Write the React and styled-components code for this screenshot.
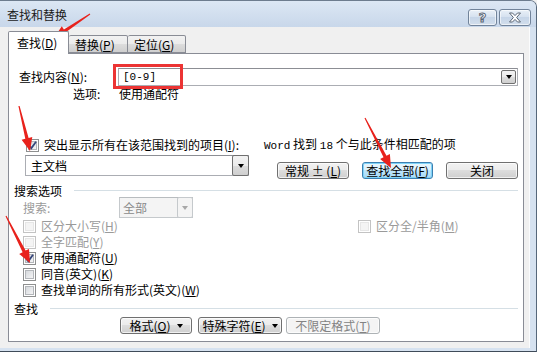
import React from "react";
import styled, { createGlobalStyle } from "styled-components";

const GlobalStyle = createGlobalStyle`
  html, body { margin: 0; padding: 0; background: #f0f0f0; }
  body {
    font-family: "Noto Sans CJK SC", "Noto Sans", sans-serif;
    font-size: 12px;
    color: #000;
  }
  * { box-sizing: border-box; }
`;

const Window = styled.div`
  position: relative;
  width: 537px;
  height: 352px;
  display: flex;
  flex-direction: column;
  background: #d6e2f0;
  border-top: 1px solid #6d7c8e;
  border-right: 1px solid #56677a;
  border-bottom: 1px solid #3f4b59;
  border-top-right-radius: 7px;
  overflow: hidden;
`;

const TitleBar = styled.div`
  height: 26px;
  flex: none;
  display: flex;
  align-items: center;
  padding: 1px 5px 0 7px;
  background: linear-gradient(#dce7f4, #c8d7ea);
`;

const Title = styled.span`
  flex: 1;
  line-height: 14px;
  color: #1a1a1a;
`;

const CaptionButtons = styled.div`
  display: flex;
  gap: 2px;
  align-self: flex-start;
  margin-top: 7px;
`;

const CaptionButton = styled.div`
  width: ${(p) => p.$w}px;
  height: 17px;
  display: flex;
  align-items: center;
  justify-content: center;
  border: 1px solid #71839a;
  border-radius: 3px;
  background: linear-gradient(#e9f0f8, #d4e0ee 50%, #c6d5e8 50%, #d2deec);
  box-shadow: inset 0 0 0 1px rgba(255, 255, 255, 0.6);
`;

const HelpGlyph = styled.span`
  font-family: "DejaVu Sans", sans-serif;
  font-weight: bold;
  font-size: 13px;
  line-height: 13px;
  color: #fff;
  -webkit-text-stroke: 1px #5b6675;
`;

const Client = styled.div`
  width: 530px;
  height: 321px;
  flex: none;
  display: flex;
  flex-direction: column;
  padding: 4px 5px 6px 8px;
  background: #f0f0f0;
  border-right: 1px solid #fbfcfd;
`;

const TabRow = styled.div`
  display: flex;
  align-items: flex-end;
  height: 23px;
  margin-bottom: -1px;
  position: relative;
  z-index: 1;
`;

const Tab = styled.div`
  width: ${(p) => p.$w}px;
  height: ${(p) => (p.$active ? 23 : 18)}px;
  margin-bottom: ${(p) => (p.$active ? 0 : 1)}px;
  padding: ${(p) => (p.$active ? "4px 0 0 8px" : "2px 0 0 6px")};
  border: 1px solid #898c95;
  border-bottom: ${(p) => (p.$active ? "none" : "1px solid #898c95")};
  border-left: ${(p) => (p.$first || p.$active ? "1px solid #898c95" : "none")};
  border-radius: 2px 2px 0 0;
  background: ${(p) =>
    p.$active ? "#fff" : "linear-gradient(#f2f2f2, #ebebeb 50%, #dddddd 50%, #cfcfcf)"};
  line-height: 14px;
  white-space: nowrap;
`;

const Key = styled.u`
  text-decoration: underline;
  text-underline-offset: 1px;
`;

const Panel = styled.div`
  width: 516px;
  height: 289px;
  display: flex;
  flex-direction: column;
  border: 1px solid #898c95;
  background: #fff;
`;

const Row = styled.div`
  display: flex;
  align-items: ${(p) => p.$align || "center"};
  height: ${(p) => p.$h}px;
  margin-top: ${(p) => p.$mt || 0}px;
  padding-left: ${(p) => p.$pl || 0}px;
  flex: none;
`;

const Text = styled.span`
  line-height: 14px;
  white-space: nowrap;
  color: ${(p) => (p.$disabled ? "#9a9a9a" : "#000")};
  width: ${(p) => (p.$w ? `${p.$w}px` : "auto")};
  flex: none;
  margin-left: ${(p) => p.$ml || 0}px;
`;

const Mono = styled.span`
  font-family: "Liberation Mono", monospace;
  font-size: 11px;
`;

const Combo = styled.div`
  width: ${(p) => p.$w}px;
  height: ${(p) => p.$h}px;
  display: flex;
  align-items: stretch;
  flex: none;
  border: 1px solid ${(p) => (p.$disabled ? "#c5c9cc" : "#abadb3")};
  border-top-color: ${(p) => (p.$disabled ? "#b8bcbf" : "#8c8e94")};
  background: ${(p) => (p.$disabled ? "#f4f4f4" : "#fff")};
  margin-left: ${(p) => p.$ml || 0}px;
`;

const ComboValue = styled.span`
  flex: 1;
  display: flex;
  align-items: center;
  padding-left: ${(p) => p.$pl || 4}px;
  line-height: 14px;
  color: ${(p) => (p.$disabled ? "#8a8a8a" : "#000")};
  font-size: ${(p) => p.$fs || 12}px;
`;

const ComboButton = styled.span`
  width: ${(p) => p.$w || 16}px;
  display: flex;
  align-items: center;
  justify-content: center;
  margin: ${(p) => (p.$inset ? "1px" : "-1px -1px -1px 0")};
  border: 1px solid ${(p) => (p.$disabled ? "#c5c9cc" : "#707070")};
  border-radius: 2px;
  background: ${(p) =>
    p.$disabled ? "#f4f4f4" : "linear-gradient(#f2f2f2, #ebebeb 50%, #dddddd 50%, #cfcfcf)"};
`;

const Caret = styled.span`
  width: 0;
  height: 0;
  border-left: 3.5px solid transparent;
  border-right: 3.5px solid transparent;
  border-top: 4px solid ${(p) => (p.$disabled ? "#a8a8a8" : "#000")};
  margin-left: ${(p) => p.$ml || 0}px;
`;

const Button = styled.div`
  width: ${(p) => p.$w}px;
  height: 17px;
  flex: none;
  display: flex;
  align-items: center;
  justify-content: center;
  margin-left: ${(p) => p.$ml || 0}px;
  border: 1px solid ${(p) => (p.$primary ? "#3c7fb1" : p.$disabled ? "#adb2b5" : "#707070")};
  border-radius: 3px;
  background: ${(p) =>
    p.$primary
      ? "linear-gradient(#eaf6fd, #d9f0fc 50%, #bee6fd 50%, #a7d9f5)"
      : p.$disabled
      ? "#f4f4f4"
      : "linear-gradient(#f2f2f2, #ebebeb 50%, #dddddd 50%, #cfcfcf)"};
  box-shadow: inset 0 0 0 1px ${(p) => (p.$primary ? "#7fd3f7" : "rgba(255,255,255,0.7)")};
  color: ${(p) => (p.$disabled ? "#838383" : "#000")};
  line-height: 14px;
  white-space: nowrap;
`;

const Check = styled.span`
  position: relative;
  width: 13px;
  height: 13px;
  flex: none;
  margin-left: ${(p) => p.$ml || 0}px;
  margin-right: 5px;
  border: 1px solid ${(p) => (p.$disabled ? "#c3c3c3" : "#8e8f8f")};
  background: #fff;
  &::before {
    content: "";
    position: absolute;
    inset: 1px;
    border: 1px solid ${(p) => (p.$disabled ? "#e6e6e6" : "#b3b6ba")};
    background: ${(p) =>
      p.$disabled ? "#f4f4f4" : "linear-gradient(135deg, #d6d9dd, #f4f4f5)"};
  }
  svg {
    position: absolute;
    left: 0;
    top: 0;
  }
`;

const GroupTitle = styled.div`
  display: flex;
  align-items: center;
  height: 14px;
  margin-top: ${(p) => p.$mt || 0}px;
  padding-left: 5px;
  flex: none;
  &::after {
    content: "";
    flex: none;
    width: ${(p) => p.$line}px;
    height: 1px;
    margin-left: auto;
    margin-right: 5px;
    background: #d5dfe5;
  }
`;

const Overlay = styled.svg`
  position: absolute;
  left: -1px;
  top: -1px;
  pointer-events: none;
`;

const arrowPoints = (x1, y1, x2, y2) => {
  const dx = x2 - x1;
  const dy = y2 - y1;
  const len = Math.hypot(dx, dy);
  const ux = dx / len;
  const uy = dy / len;
  const nx = -uy;
  const ny = ux;
  const head = 13;
  const hw = 5.5;
  const w0 = 0.6;
  const w1 = 1.7;
  const bx = x2 - ux * head;
  const by = y2 - uy * head;
  return [
    [x1 + nx * w0, y1 + ny * w0],
    [bx + nx * w1, by + ny * w1],
    [bx + nx * hw, by + ny * hw],
    [x2, y2],
    [bx - nx * hw, by - ny * hw],
    [bx - nx * w1, by - ny * w1],
    [x1 - nx * w0, y1 - ny * w0],
  ]
    .map((p) => p.map((v) => v.toFixed(1)).join(","))
    .join(" ");
};

const arrows = [
  [91, 14, 55, 38],
  [20, 106, 31, 151],
  [366, 118, 392, 168],
  [7, 216, 31, 263],
];

const CheckBox = ({ checked, disabled, ml }) => (
  <Check $disabled={disabled} $ml={ml}>
    {checked && (
      <svg width="11" height="11" viewBox="0 0 11 11">
        <path d="M2 5.5 L4.3 8.2 L9 1.8" fill="none" stroke="#34457a" strokeWidth="1.8" />
      </svg>
    )}
  </Check>
);

const checkRows = [
  { label: "区分大小写", key: "H", disabled: true, right: { label: "区分全/半角", key: "M" } },
  { label: "全字匹配", key: "Y", disabled: true },
  { label: "使用通配符", key: "U", checked: true },
  { label: "同音(英文)", key: "K" },
  { label: "查找单词的所有形式(英文)", key: "W" },
];

const App = () => (
  <>
    <GlobalStyle />
    <Window>
      <TitleBar>
        <Title>查找和替换</Title>
        <CaptionButtons>
          <CaptionButton $w={29}>
            <HelpGlyph>?</HelpGlyph>
          </CaptionButton>
          <CaptionButton $w={32}>
            <svg width="14" height="11" viewBox="0 0 14 11">
              <path
                d="M1.5 1 H4.5 L7 3.6 L9.5 1 H12.5 L8.6 5.5 L12.5 10 H9.5 L7 7.4 L4.5 10 H1.5 L5.4 5.5 Z"
                fill="#fff"
                stroke="#5b6675"
                strokeWidth="1"
              />
            </svg>
          </CaptionButton>
        </CaptionButtons>
      </TitleBar>
      <Client>
        <TabRow>
          <Tab $w={61} $active>
            查找(<Key>D</Key>)
          </Tab>
          <Tab $w={59}>
            替换(<Key>P</Key>)
          </Tab>
          <Tab $w={58}>
            定位(<Key>G</Key>)
          </Tab>
        </TabRow>
        <Panel>
          <Row $h={18} $mt={14} $pl={10}>
            <Text $w={99}>
              查找内容(<Key>N</Key>):
            </Text>
            <Combo $w={400} $h={18}>
              <ComboValue $pl={4}>
                <Mono>[0-9]</Mono>
              </ComboValue>
              <ComboButton $inset $w={15}>
                <Caret />
              </ComboButton>
            </Combo>
          </Row>
          <Row $h={14} $mt={1} $pl={64}>
            <Text $w={46}>选项:</Text>
            <Text>使用通配符</Text>
          </Row>
          <Row $h={14} $mt={37} $pl={17}>
            <CheckBox checked />
            <Text>
              突出显示所有在该范围找到的项目(<Key>I</Key>):
            </Text>
            <Text $ml={25}>
              <Mono>Word</Mono> 找到 <Mono>18</Mono> 个与此条件相匹配的项
            </Text>
          </Row>
          <Row $h={24} $mt={3} $pl={16} $align="flex-start">
            <Combo $w={224} $h={21}>
              <ComboValue $pl={5}>主文档</ComboValue>
              <ComboButton $w={17}>
                <Caret />
              </ComboButton>
            </Combo>
            <Row $h={24} $align="flex-end">
              <Button $w={72} $ml={28}>
                常规 ± (<Key>L</Key>)
              </Button>
              <Button $w={71} $ml={13} $primary>
                查找全部(<Key>F</Key>)
              </Button>
              <Button $w={72} $ml={13}>
                关闭
              </Button>
            </Row>
          </Row>
          <GroupTitle $mt={4} $line={444}>
            搜索选项
          </GroupTitle>
          <Row $h={21} $pl={14}>
            <Text $w={96} $disabled>
              搜索:
            </Text>
            <Combo $w={74} $h={21} $disabled>
              <ComboValue $disabled $pl={3}>
                全部
              </ComboValue>
              <ComboButton $disabled $w={16}>
                <Caret $disabled />
              </ComboButton>
            </Combo>
          </Row>
          {checkRows.map((r) => (
            <Row key={r.key} $h={16} $pl={14}>
              <CheckBox checked={r.checked} disabled={r.disabled} />
              <Text $w={317} $disabled={r.disabled}>
                {r.label}(<Key>{r.key}</Key>)
              </Text>
              {r.right && (
                <>
                  <CheckBox disabled />
                  <Text $disabled>
                    {r.right.label}(<Key>{r.right.key}</Key>)
                  </Text>
                </>
              )}
            </Row>
          ))}
          <GroupTitle $mt={3} $line={468}>
            查找
          </GroupTitle>
          <Row $h={17} $mt={2} $pl={111}>
            <Button $w={72}>
              格式(<Key>O</Key>)
              <Caret $ml={6} />
            </Button>
            <Button $w={84} $ml={6}>
              特殊字符(<Key>E</Key>)
              <Caret $ml={6} />
            </Button>
            <Button $w={94} $ml={4} $disabled>
              不限定格式(<Key>T</Key>)
            </Button>
          </Row>
        </Panel>
      </Client>
      <Overlay width="537" height="352" viewBox="0 0 537 352">
        <rect x="115.5" y="65.5" width="67" height="22" fill="none" stroke="#ec3434" strokeWidth="3" />
        {arrows.map((a, i) => (
          <polygon key={i} points={arrowPoints(...a)} fill="#e8221c" />
        ))}
      </Overlay>
    </Window>
  </>
);

export default App;
